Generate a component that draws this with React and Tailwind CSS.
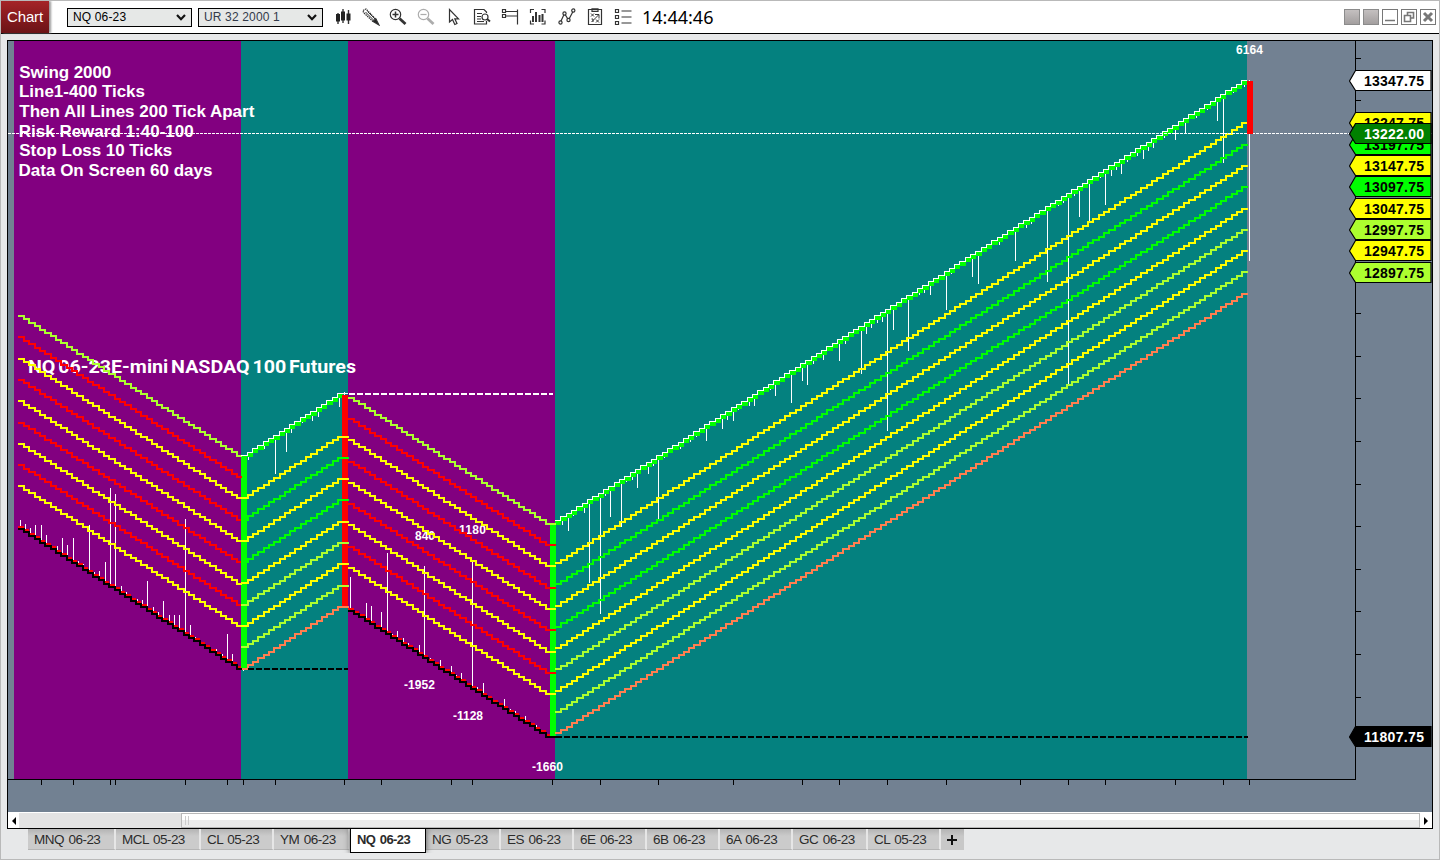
import React from 'react'
import clsx from 'clsx'

// renko geometry: one brick = 32 ticks = 8 points
const BAR_W = 5.32
const BRICK = 3.408
const POINT = 0.42597

const edge = (i) => Math.round(17.84 + i * BAR_W)

const DOWN_LINES = [
  [100, '#ffff00'], [150, '#ff0000'], [200, '#ffff00'], [250, '#ff0000'], [300, '#ffff00'],
  [350, '#ff0000'], [400, '#ffff00'], [450, '#ff0000'], [500, '#adff2f'],
]
const UP_LINES = [
  [100, '#ffff00'], [150, '#00ff00'], [200, '#ffff00'], [250, '#00ff00'], [300, '#ffff00'],
  [350, '#adff2f'], [400, '#ffff00'], [450, '#adff2f'], [500, '#ff7f50'],
]

// from/to are bar numbers, bricks the first and last bar that moves
const SWINGS = [
  { dir: 'down', from: 0, to: 41, level: (i) => 529 + BRICK * i, bricks: [0, 41] },
  { dir: 'up', from: 42, to: 61, level: (i) => 455.7 - 3.43 * Math.min(i - 42, 18), bricks: [43, 60] },
  { dir: 'down', from: 62, to: 100, level: (i) => 610.6 + BRICK * Math.min(i - 62, 37), bricks: [62, 99] },
  { dir: 'up', from: 101, to: 230, level: (i) => 520.4 - BRICK * (i - 101), bricks: [101, 230] },
]

const WICKS = [
  [20,520],[25,524],[30,528],[35,525],[41,525],[46,535],[51,545],[57,546],[62,538],[67,545],[73,538],[78,561],
  [83,564],[89,525],[94,572],[99,571],[105,562],[110,488],[115,494],[121,586],[126,592],[137,599],[142,600],
  [147,581],[153,607],[158,612],[163,601],[169,615],[174,615],[179,615],[185,519],[190,625],[195,637],[200,640],
  [216,649],[222,654],[227,634],[232,654],
  [248,460],[264,449],[275,474],[286,452],[291,433],[302,423],[307,419],[312,421],[318,417],[323,409],[334,402],[339,407],
  [350,577],[355,611],[366,603],[371,606],[381,612],[387,553],[392,634],[397,631],[403,638],[408,643],[414,648],
  [419,645],[424,566],[430,658],[440,660],[451,666],[456,675],[461,673],[472,561],[477,687],[483,683],[504,699],
  [510,709],[515,711],[525,716],[530,722],[536,725],
  [557,525],[562,525],[568,531],[573,516],[584,513],[589,583],[600,614],[605,496],[610,517],[621,527],[626,482],
  [632,480],[637,488],[642,470],[648,474],[653,466],[658,519],[664,458],[680,449],[685,443],[690,442],[696,437],
  [706,441],[722,429],[727,420],[733,421],[738,410],[749,406],[754,406],[770,390],[775,396],[786,378],[791,403],
  [802,381],[807,385],[813,364],[823,360],[829,351],[834,348],[839,361],[845,344],[861,374],[866,334],[871,328],
  [877,323],[882,322],[887,431],[893,330],[898,307],[908,351],[914,297],[919,295],[924,293],[930,295],[941,278],
  [946,310],[951,274],[972,277],[978,284],[983,252],[999,245],[1010,235],[1015,261],[1026,228],[1031,224],
  [1047,282],[1058,206],[1063,203],[1068,384],[1074,196],[1079,217],[1089,223],[1100,178],[1105,205],[1111,176],
  [1116,170],[1121,174],[1127,162],[1137,156],[1143,159],[1148,151],[1153,148],[1164,138],[1175,140],[1185,134],
  [1191,119],[1196,118],[1207,110],[1217,121],[1223,163],[1233,93],[1244,87],
]

const TIME_TICKS = [41, 73, 110, 115, 185, 227, 243, 275, 344, 381, 451, 472, 552, 600, 658, 733, 802, 839, 887, 946, 1020, 1068, 1105, 1175, 1223, 1249]
const PRICE_TICKS = Array.from({ length: 16 }, (_, i) => Math.floor(58 + i * 42.6))

const PRICES = [
  { y: 81, text: '13347.75', bg: '#ffffff' },
  { y: 123, text: '13247.75', bg: '#ffff00' },
  { y: 145, text: '13197.75', bg: '#00ff00' },
  { y: 166, text: '13147.75', bg: '#ffff00' },
  { y: 187, text: '13097.75', bg: '#00ff00' },
  { y: 209, text: '13047.75', bg: '#ffff00' },
  { y: 230, text: '12997.75', bg: '#adff2f' },
  { y: 251, text: '12947.75', bg: '#ffff00' },
  { y: 273, text: '12897.75', bg: '#adff2f' },
  { y: 134, text: '13222.00', bg: '#008000', color: '#ffffff' },
  { y: 737, text: '11807.75', bg: '#000000', color: '#ffffff' },
]

const NOTES = [
  ['Swing 2000', 19.3, 78, 92],
  ['Line1-400 Ticks', 19, 97, 126],
  ['Then All Lines 200 Tick Apart', 19.3, 117, 235],
  ['Risk Reward 1:40-100', 18.7, 137, 175],
  ['Stop Loss 10 Ticks', 19.3, 156, 153],
  ['Data On Screen 60 days', 18.5, 176, 194],
]

const SWING_LABELS = [
  ['6164', 1236, 54, 27], ['840', 415, 540, 20], ['1180', 459, 534, 27],
  ['-1952', 404, 689, 31], ['-1128', 453, 720, 30], ['-1660', 532, 771, 31],
]

const TABS = [
  ['MNQ 06-23', 'w-[88px]'], ['MCL 05-23', 'w-[85px]'], ['CL 05-23', 'w-[73px]'], ['YM 06-23', 'w-[76px]'],
  ['NQ 06-23', 'w-[76px]', true], ['NG 05-23', 'w-[75px]'], ['ES 06-23', 'w-[73px]'], ['6E 06-23', 'w-[73px]'],
  ['6B 06-23', 'w-[73px]'], ['6A 06-23', 'w-[73px]'], ['GC 06-23', 'w-[75px]'], ['CL 05-23', 'w-[73px]'],
]

// staircase path, sits at a fixed point offset from the swing's extreme
function stepPath(swing, offset) {
  const sign = swing.dir === 'down' ? -1 : 1
  let d = ''
  let prev = null
  for (let i = swing.from; i <= swing.to; i++) {
    const y = Math.round(swing.level(i) + sign * offset * POINT)
    const x = edge(i)
    d += prev === null ? `M${x} ${y}` : `H${x + 1}V${y}`
    prev = y
  }
  return d + `H${edge(swing.to + 1) + 1}`
}

function highPath(swing) {
  let d = ''
  for (let i = swing.from; i <= swing.to; i++) {
    const y = Math.floor(swing.level(i)) + 0.5
    d += i === swing.from ? `M${edge(i)} ${y}` : `H${edge(i) + 0.5}V${y}`
  }
  return d + `H${edge(swing.to + 1)}`
}

function Bricks({ swing }) {
  const out = []
  for (let i = swing.bricks[0]; i <= swing.bricks[1]; i++) {
    const x = edge(i)
    const y = swing.level(i)
    out.push(swing.dir === 'up'
      ? <rect key={i} x={x} y={Math.floor(y) + 1} width={edge(i + 1) - x + 1} height={4} fill="#00ff00"/>
      : <rect key={i} x={x} y={Math.round(y) - 3} width={edge(i + 1) - x + 1} height={3} fill="#ff0000"/>)
  }
  return <g>{out}</g>
}

function Wicks() {
  return WICKS.map(([x, y]) => {
    const bar = Math.round((x + 0.5 - 20.5) / BAR_W)
    const swing = SWINGS.find(s => bar >= s.from && bar <= s.to)
    const lvl = Math.round(swing.level(bar))
    return <rect key={x} x={x} y={Math.min(y, lvl)} width={1} height={Math.max(1, Math.abs(lvl - y))} fill="#fff"/>
  })
}

function PriceTag({ y, text, bg, color = '#000000' }) {
  return (
    <g>
      <path d={`M1349.5 ${y}L1355.5 ${y - 10.5}H1431V${y + 9.5}H1355.5Z`} fill={bg} stroke="#000" strokeWidth="1.2"/>
      <text x="1364" y={y + 5} textLength="60" fontSize="14" fontWeight="bold" fill={color}>{text}</text>
    </g>
  )
}

function Chart() {
  return (
    <svg className="block bg-[#728192]" width="1424" height="771" viewBox="8 41 1424 771" fontFamily='"Liberation Sans", Arial, sans-serif'>
      <g shapeRendering="crispEdges">
        <rect x="14" y="41" width="227" height="738" fill="#820080"/>
        <rect x="241" y="41" width="107" height="738" fill="#04817f"/>
        <rect x="348" y="41" width="207" height="738" fill="#820080"/>
        <rect x="555" y="41" width="692" height="738" fill="#04817f"/>
      </g>

      <g fill="#fff" fontWeight="bold">
        {NOTES.map(([t, x, y, w]) => <text key={t} x={x} y={y} fontSize="17" textLength={w}>{t}</text>)}
        {SWING_LABELS.map(([t, x, y, w]) => <text key={t} x={x} y={y} fontSize="12" textLength={w}>{t}</text>)}
        <text x="28" y="373" fontSize="19" wordSpacing="-2" fontFamily='Roboto, "Liberation Sans", sans-serif' textLength="328" lengthAdjust="spacingAndGlyphs">NQ 06-23E-mini NASDAQ 100 Futures</text>
      </g>

      <g shapeRendering="crispEdges">
        <Wicks/>
        {SWINGS.map((s, i) => <Bricks key={i} swing={s}/>)}
        <rect x="241" y="456" width="6" height="213" fill="#00ff00"/>
        <rect x="342" y="395" width="6" height="211" fill="#ff0000"/>
        <rect x="550" y="524" width="6" height="212" fill="#00ff00"/>
        <rect x="243" y="669" width="1" height="2" fill="#fff"/>
        <rect x="344" y="392" width="1" height="3" fill="#fff"/>

        <g fill="none" strokeWidth="2">
          {SWINGS.map((s, i) => (s.dir === 'up' ? UP_LINES : DOWN_LINES).map(([off, color]) =>
            <path key={i + '-' + off} d={stepPath(s, off)} stroke={color}/>
          ))}
          {SWINGS.map((s, i) => s.dir === 'up'
            ? <path key={i} d={highPath(s)} stroke="#fff" strokeWidth="1"/>
            : <path key={i} d={stepPath(s, 0)} stroke="#000"/>
          )}
          <path d="M349 394H553" stroke="#fff" strokeDasharray="6 2"/>
          <path d="M248 669H348" stroke="#000" strokeDasharray="6 2"/>
          <path d="M556 737H1248" stroke="#000" strokeDasharray="6 2"/>
          <path d="M8 133.5H1349" stroke="#fff" strokeWidth="1" strokeDasharray="3 1"/>
        </g>

        <rect x="1247" y="81" width="6" height="53" fill="#ff0000"/>
        <rect x="1249" y="80" width="1" height="1" fill="#fff"/>
        <rect x="1249" y="134" width="1" height="127" fill="#fff"/>

        <path d="M8 779.5H1355.5V41" fill="none" stroke="#000"/>
        {TIME_TICKS.map(x => <rect key={x} x={x} y="780" width="1" height="5"/>)}
        {PRICE_TICKS.map(y => <rect key={y} x="1356" y={y} width="5" height="1"/>)}
      </g>

      {PRICES.map(p => <PriceTag key={p.text} {...p}/>)}
    </svg>
  )
}

function Select({ value, className }) {
  return (
    <div className={clsx('flex h-[19px] w-[125px] items-center justify-between border border-black bg-[#e6e8e7] pr-[5px] pl-[5px] text-[12px] leading-none tracking-[0.15px]', className)}>
      <span className="whitespace-nowrap">{value}</span>
      <svg width="10" height="7" viewBox="0 0 10 7" fill="none" stroke="#111" strokeWidth="2.2"><path d="M1 1L5 5.2L9 1"/></svg>
    </div>
  )
}

function Icon({ children, className }) {
  return (
    <svg className={clsx('shrink-0', className)} width="18" height="18" viewBox="0 0 18 18" fill="none" stroke="#333" strokeWidth="1.2">
      {children}
    </svg>
  )
}

function Toolbar() {
  return (
    <div className="ml-[11px] flex items-center gap-[10px]">
      <Icon>
        <path d="M4 5V16M9 1V15M14.500 2V16" strokeWidth="1.400"/>
        <path d="M2 6h4v7.500H2zM7 3.500h4v9H7zM12.500 5.500h4v7h-4z" fill="#222" stroke="none"/>
      </Icon>
      <Icon>
        <path d="M1 2.500L4 1L14 11.500L11.500 14L1.500 4.500Z" strokeDasharray="1.500 .7"/>
        <path d="M3.500 4L12 12.500M5.500 3.500L13 11" strokeWidth="1"/>
        <path d="M11 13.500L13.800 10.800L17 17Z" fill="#222"/>
      </Icon>
      <Icon className="-ml-px">
        <circle cx="6.500" cy="6.500" r="5.200"/>
        <path d="M3.500 6.500h6M6.500 3.500v6" strokeWidth="1.500"/>
        <path d="M10.500 10.500L16.500 16" strokeWidth="2.800"/>
      </Icon>
      <Icon className="opacity-40">
        <circle cx="6.500" cy="6.500" r="5.200"/>
        <path d="M3.500 6.500h6"/>
        <path d="M10.500 10.500L16.500 16" strokeWidth="2.800"/>
      </Icon>
      <Icon>
        <path d="M4.500 1.500V14L7.500 11.500L9.800 16.500L12 15.500L9.800 10.800H13.500Z"/>
      </Icon>
      <Icon>
        <path d="M13.500 5V4L11 1.500H1.500V16H13.500V13M4 5.500h5M4 8.500h4M4 11h4M4 13.500h7" />
        <circle cx="12" cy="9" r="3"/>
        <path d="M14 11L17 13.500" strokeWidth="2"/>
      </Icon>
      <Icon>
        <path d="M1.500 1.500h3v3h-3zM1.500 6.500h3v3h-3zM4.500 3.500h12M4.500 8h12M16.500 1.500v15"/>
      </Icon>
      <Icon>
        <path d="M1.500 5V1.500H5M12.500 1.500H16V5M1.500 12.500V16H5M12.500 16H16V12.500"/>
        <path d="M4 8v6M7 4v10M10.500 7v7M13.500 6v8" strokeWidth="2"/>
      </Icon>
      <Icon className="ml-[1px]">
        <path d="M2.500 14L6.500 5.500L10.500 12L15 3.500"/>
        <g fill="#fff"><circle cx="2.500" cy="14.500" r="1.600"/><circle cx="6.500" cy="5.500" r="1.600"/><circle cx="10.500" cy="12" r="1.600"/><circle cx="15.300" cy="2.500" r="1.600"/></g>
      </Icon>
      <Icon>
        <path d="M2.500 1.500h13v15h-13zM6 .8h6v2.500H6z"/>
        <path d="M5 5.500l3 3M8 5.500l-3 3M5.500 14L12.500 7M9 6.500h4v4M10 11.500l3 3M13 11.500l-3 3M5.500 11h1.500v3" strokeWidth="1"/>
      </Icon>
      <Icon>
        <path d="M1.500 1.500h3v3h-3zM1.500 7.500h3v3h-3zM1.500 13.500h3v3h-3zM7.500 3h10M7.500 9h10M7.500 15h10"/>
      </Icon>
    </div>
  )
}

function WindowButtons() {
  return (
    <div className="mr-[3px] ml-auto flex items-center gap-[3px]">
      <div className="h-4 w-4 border border-[#8b8b8b] bg-gradient-to-b from-[#c4c0c0] to-[#a39f9f]"/>
      <div className="h-4 w-4 border border-[#8b8b8b] bg-gradient-to-b from-[#c4c0c0] to-[#a39f9f]"/>
      <svg width="16" height="16" fill="none" stroke="#777"><rect x=".5" y=".5" width="15" height="15"/><path d="M3 11.500h10" strokeWidth="1.500"/></svg>
      <svg width="16" height="16" fill="none" stroke="#777"><rect x=".5" y=".5" width="15" height="15"/><path d="M6.500 7V3.500h6v5.500H10M3.500 6.500h6v6h-6z" strokeWidth="1.600"/></svg>
      <svg width="16" height="16" fill="none" stroke="#777"><rect x=".5" y=".5" width="15" height="15"/><path d="M4 4L12 12M12 4L4 12" strokeWidth="3"/></svg>
    </div>
  )
}

function ScrollBar() {
  return (
    <div className="flex h-4 border-t border-white bg-[#e3e3e3]">
      <div className="flex w-[11px] items-center justify-center bg-white">
        <svg width="4" height="8"><path d="M4 0V8L0 4Z"/></svg>
      </div>
      <div className="ml-[162px] flex h-[15px] w-[1239px] items-center gap-[2px] border border-[#b8b8b8] bg-gradient-to-b from-white from-50% to-[#ebebeb] to-50% pl-[3px]">
        <div className="h-[9px] w-px bg-[#ccc]"/>
        <div className="h-[9px] w-px bg-[#ccc]"/>
      </div>
      <div className="flex grow items-center justify-center bg-white">
        <svg width="4" height="8"><path d="M0 0V8L4 4Z"/></svg>
      </div>
    </div>
  )
}

function Tabs() {
  return (
    <div className="ml-[27px] flex h-[30px] items-start text-[13.5px] tracking-[-0.55px] whitespace-nowrap text-[#2b2b2b] [word-spacing:1.5px]">
      {TABS.map(([name, width, active], i) => active ? (
        <div key={i} className={clsx('z-10 -mt-px h-[25px] border border-t-0 border-black bg-white pt-px pl-[6px] text-[13px] leading-[22px] font-bold tracking-[-0.6px] shadow-[0_0_6px_#555] [clip-path:inset(1px_-8px_0_-8px)]', width)}>
          {name}
        </div>
      ) : (
        <div key={i} className={clsx('h-[21px] border-r-2 border-b border-r-[#e6e6e6] border-b-[#b5b5b5] bg-gradient-to-b from-[#b4b4b4] to-[#cbcbcb] to-35% pl-[6px] leading-[21px]', width)}>
          {name}
        </div>
      ))}
      <div className="flex h-[21px] w-[23px] items-center justify-center bg-gradient-to-b from-[#b4b4b4] to-[#c8c8c8] to-35%">
        <svg className="-ml-px" width="10" height="10" stroke="#111" strokeWidth="2"><path d="M0 5H10M5 0V10"/></svg>
      </div>
    </div>
  )
}

export default function App() {
  return (
    <div className="flex h-[860px] w-[1440px] flex-col overflow-hidden border border-[#b9b9b9] bg-[#e7e8e9] font-['Liberation_Sans',Arial,sans-serif] text-black">
      <div className="flex h-[33px] shrink-0 items-center border-b border-black bg-white">
        <div className="flex h-full w-12 items-center justify-center bg-gradient-to-b from-[#a52427] to-[#6b1316] text-[15px] tracking-[-0.1px] text-white shadow-[2px_0_2px_#999]">Chart</div>
        <Select value="NQ 06-23" className="ml-[18px]"/>
        <Select value="UR 32 2000 1" className="ml-[6px] text-[#333a4a]"/>
        <Toolbar/>
        <div className="ml-[10px] font-['Noto_Sans',sans-serif] text-[18px] leading-none">14:44:46</div>
        <WindowButtons/>
      </div>
      <div className="mt-[6px] ml-[6px] w-[1426px] shrink-0 border border-black">
        <Chart/>
        <ScrollBar/>
      </div>
      <Tabs/>
    </div>
  )
}
